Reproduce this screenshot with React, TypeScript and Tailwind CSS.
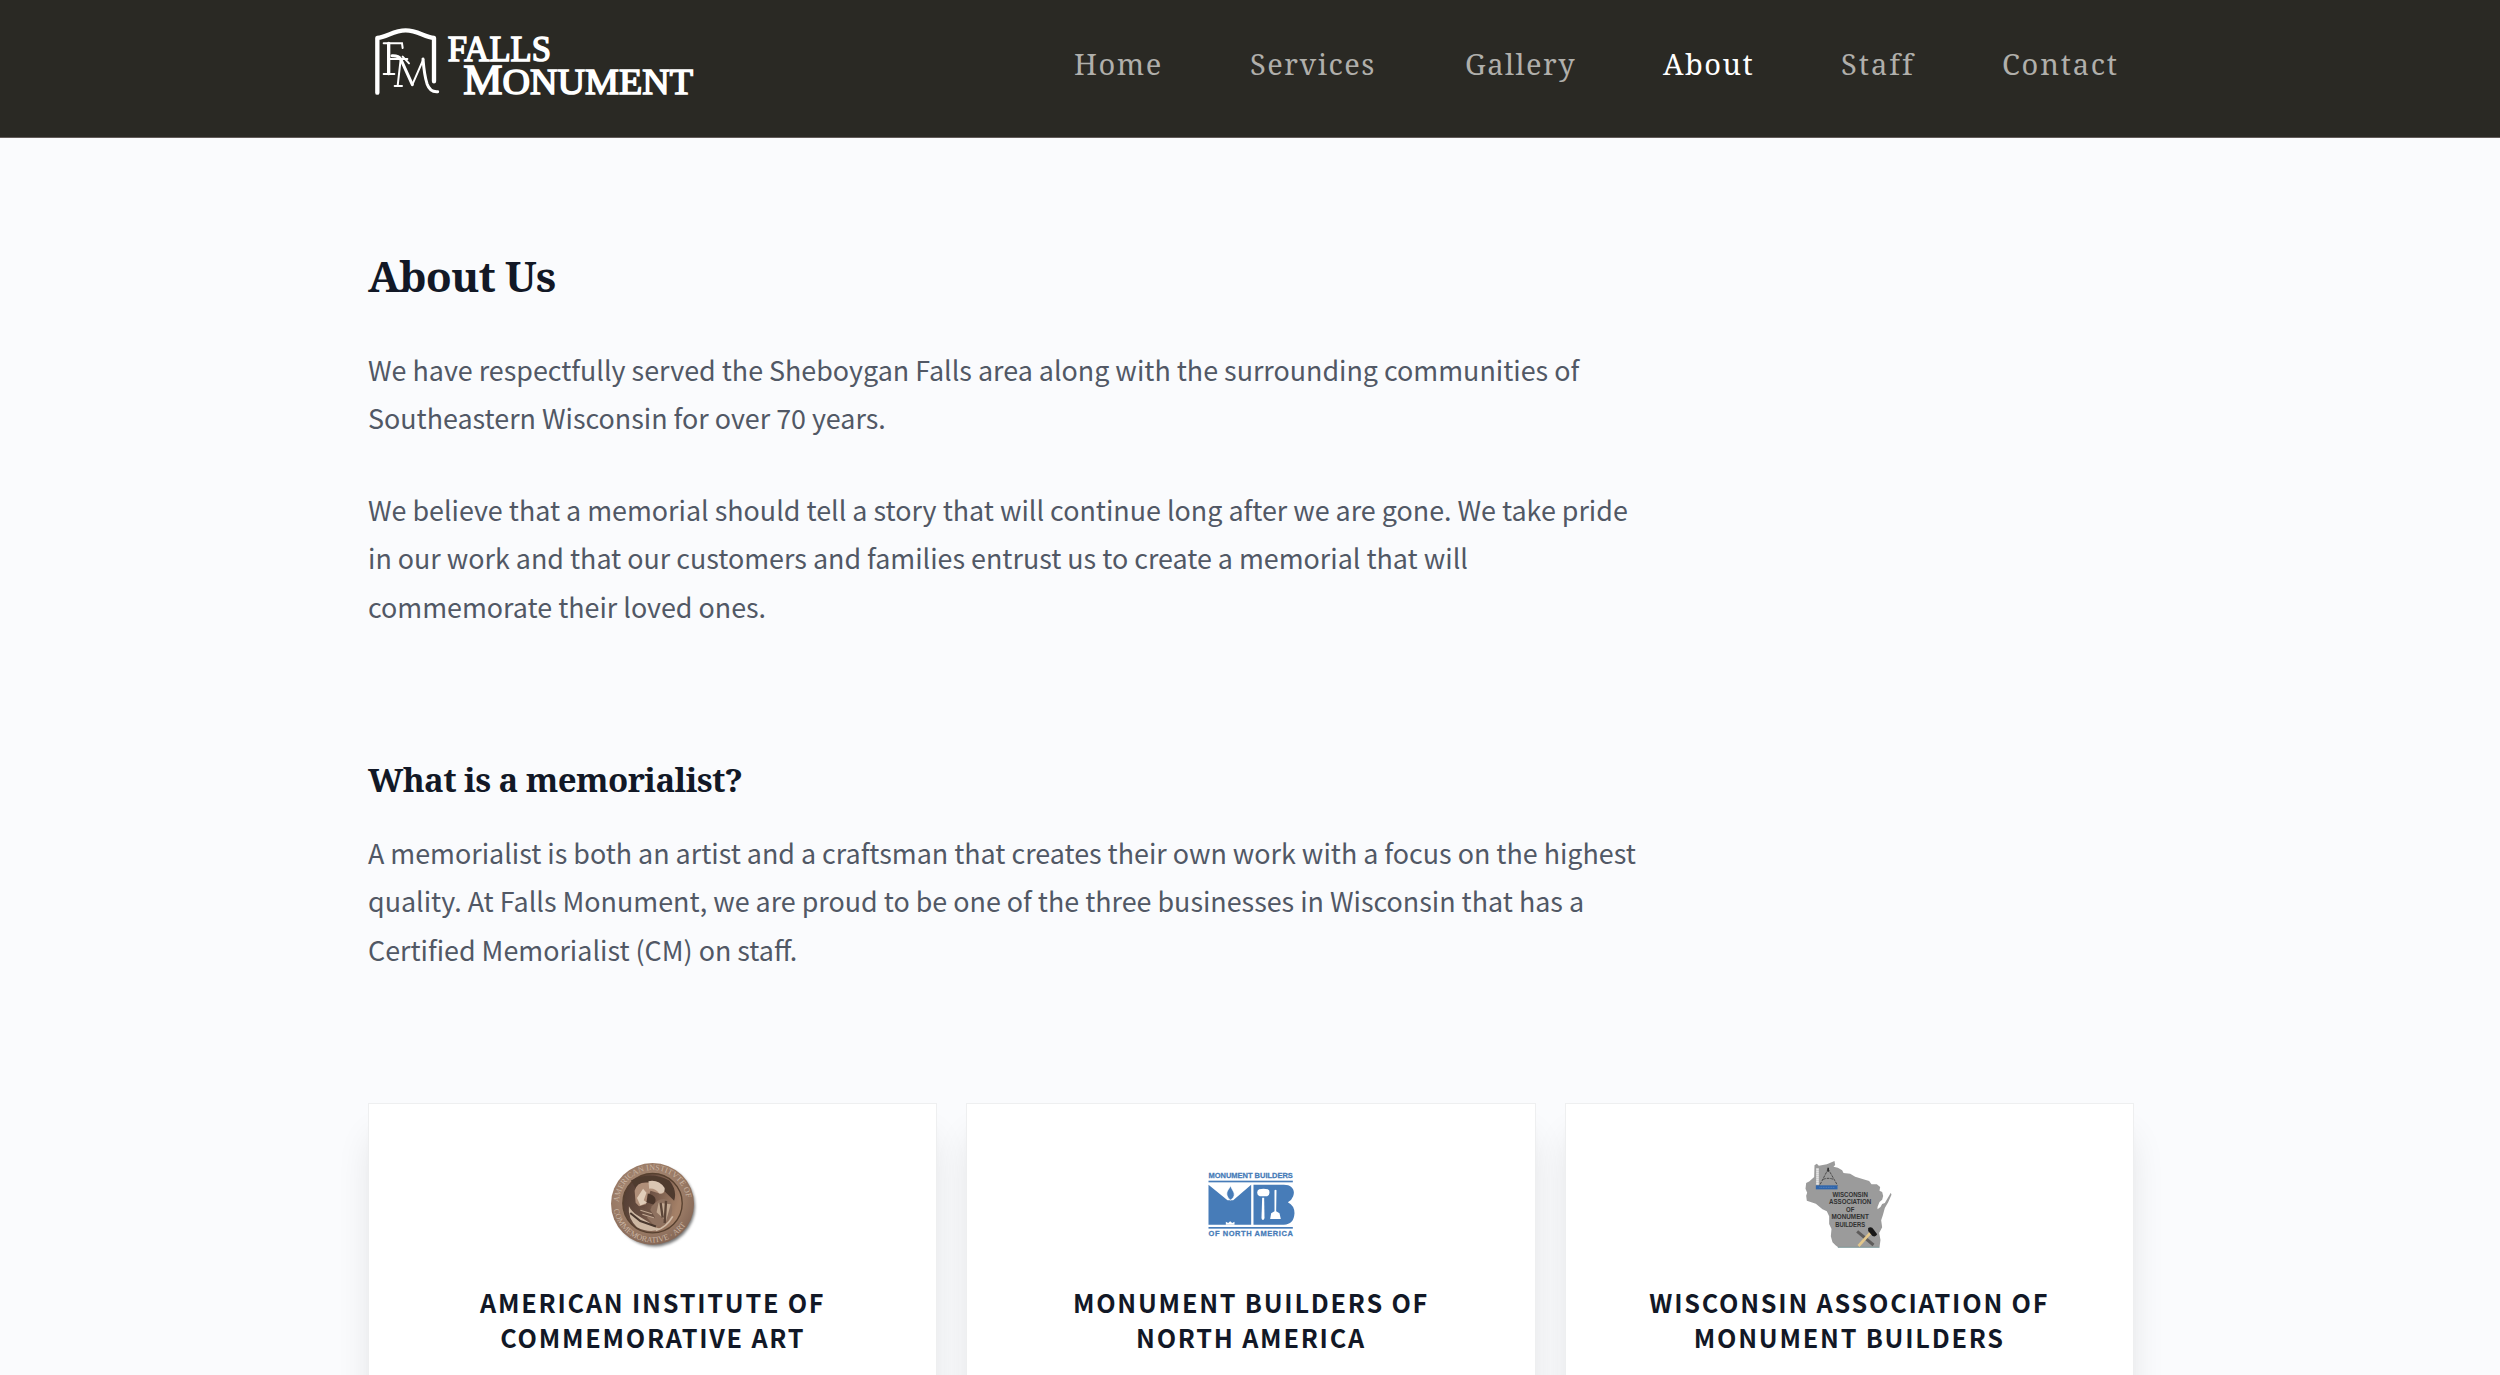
import React from 'react';

const navItems = [
  { label: 'Home', width: 'w-[176px]' },
  { label: 'Services', width: 'w-[215px]' },
  { label: 'Gallery', width: 'w-[198px]' },
  { label: 'About', width: 'w-[178px]', active: true },
  { label: 'Staff', width: 'w-[161px]', tracking: 'tracking-[2px]' },
  { label: 'Contact', width: 'w-[130px]', tracking: 'tracking-[1.8px]' },
];

function Logo() {
  return (
    <svg className="mt-[26px] ml-[7px] h-[72px] w-[320px] overflow-visible" viewBox="75 78 960 216" fill="#ffffff">
      <path
        d="M82 278V114C112 110 132 91 167 91C202 91 222 110 252 114V244"
        fill="none"
        stroke="#ffffff"
        strokeWidth="13"
        strokeLinecap="round"
        strokeLinejoin="round"
      />
      <g fill="none" stroke="#ffffff" strokeLinecap="round">
        <path d="M116 130V221" strokeWidth="10" />
        <path d="M101 130H156L158 144M101 222H133M116 177H172M158 170L177 190" strokeWidth="6" />
        <path d="M126 167Q146 166 152 177L187 254" strokeWidth="9" />
        <path d="M152 178L143 257M134 258H156" strokeWidth="6" />
        <path d="M187 254L220 178" strokeWidth="6" />
        <path d="M219 177Q223 226 231 251Q240 277 263 275" strokeWidth="9" />
      </g>
      <g fontFamily="'Liberation Serif', serif" stroke="#ffffff" strokeWidth="4.5">
        <text x="293" y="184" fontSize="107" textLength="310" lengthAdjust="spacingAndGlyphs">FALLS</text>
        <text x="340" y="281" fontSize="107" textLength="689" lengthAdjust="spacingAndGlyphs">
          <tspan fontSize="124">M</tspan>ONUMENT
        </text>
      </g>
    </svg>
  );
}

function MedalLogo() {
  return (
    <svg className="size-[86.4px] overflow-visible" viewBox="60 62 256 256">
      <defs>
        <radialGradient id="medal" cx="0.45" cy="0.4" r="0.6">
          <stop offset="0" stopColor="#b39581" />
          <stop offset="0.75" stopColor="#987964" />
          <stop offset="1" stopColor="#866857" />
        </radialGradient>
        <linearGradient id="bowl" x1="0" y1="0" x2="1" y2="0.3">
          <stop offset="0" stopColor="#4e3a30" />
          <stop offset="0.5" stopColor="#6a4f42" />
          <stop offset="1" stopColor="#a58168" />
        </linearGradient>
        <filter id="soft" x="-20%" y="-20%" width="140%" height="140%">
          <feGaussianBlur stdDeviation="4" />
        </filter>
        <filter id="relief">
          <feGaussianBlur stdDeviation="1.6" />
        </filter>
        <path id="ring-top" d="M86 184A101 101 0 0 1 288 196" />
        <path id="ring-bottom" d="M71 206A118 118 0 0 0 302 212" />
      </defs>
      <circle cx="193" cy="196" r="119" fill="#000000" opacity="0.55" filter="url(#soft)" />
      <ellipse cx="186" cy="189" rx="123" ry="121" fill="url(#medal)" />
      <g fill="#c9b4a2" fontFamily="'Liberation Serif', serif" fontSize="24">
        <text>
          <textPath href="#ring-top">AMERICAN INSTITVTE OF</textPath>
        </text>
        <text>
          <textPath href="#ring-bottom">COMMEMORATIVE · ART</textPath>
        </text>
      </g>
      <circle cx="186" cy="187" r="88" fill="url(#bowl)" stroke="#57402f" strokeWidth="4" />
      <g filter="url(#relief)">
        <path d="M122 120Q180 90 236 120Q260 150 250 180L220 150L140 150Z" fill="#503a2f" />
        <path d="M133 150Q140 122 174 126L218 142Q226 156 212 160L180 150L166 190L146 196L136 186Z" fill="#b08f79" />
        <path d="M174 122Q204 116 222 142Q224 160 206 158Q194 142 176 144Z" fill="#dac6b3" />
        <path d="M158 144L168 156L160 178L170 186L150 194L140 172Z" fill="#e0cdb9" />
        <path d="M172 158Q206 166 190 192L168 184Z" fill="#4a352c" />
        <path d="M184 196Q216 158 242 188Q252 222 222 250L196 258L170 230Z" fill="#8f7260" />
        <path d="M204 186L240 190L226 240L198 214Z" fill="#c3aa93" />
        <path d="M210 186L216 230M226 180L222 246" stroke="#5b4538" strokeWidth="7" fill="none" />
        <path d="M116 196Q126 214 140 222L176 244Q190 262 216 262Q178 278 140 258Q112 232 116 196Z" fill="#cdb7a2" />
        <path d="M120 216L150 240L196 256" stroke="#4a372d" strokeWidth="6" fill="none" />
        <path d="M148 200L178 206L194 230L164 224Z" fill="#6d5344" />
        <path d="M246 226Q228 258 196 268" stroke="#d0bba7" strokeWidth="5" fill="none" />
        <path d="M150 208L184 218M156 220L190 230" stroke="#c1a893" strokeWidth="3" fill="none" />
      </g>
    </svg>
  );
}

function BuildersLogo() {
  return (
    <svg className="size-[86.4px] overflow-visible" viewBox="53.5 33 259.2 259.2" fill="#477cb8">
      <g fontFamily="'Liberation Sans', sans-serif" fontWeight="700" fontSize="22.5">
        <text x="55" y="85" textLength="253" stroke="#477cb8" strokeWidth="0.8">MONUMENT BUILDERS</text>
        <text x="55" y="257" textLength="253" stroke="#477cb8" strokeWidth="0.8">OF NORTH AMERICA</text>
      </g>
      <rect x="55" y="92" width="253" height="5" />
      <rect x="55" y="231" width="253" height="5" />
      <path d="M55 104L112 151H129L183 104V224H55Z" />
      <path d="M121 107C116 119 107 124 111 137C113 144 118 148 121 150C125 147 131 144 132 136C134 126 125 120 121 107Z" stroke="#ffffff" strokeWidth="2" />
      <path d="M107 224V215L114 219L120 214L126 219L133 215V224Z" fill="#ffffff" />
      <path d="M190 104H281C306 104 316 120 309 139Q305 151 293 157Q313 167 313 190Q311 224 281 224H190Z" />
      <g fill="#ffffff">
        <path d="M207 118Q220 114 233 118Q239 120 238 128Q238 135 231 139H209Q201 136 201 128Q201 121 207 118Z" />
        <path d="M216 143H222L223 204Q222 210 218 210Q214 209 214 204Z" />
        <path d="M253 121Q257 117 259 121L258 184L268 190L272 207H240L243 190L253 184Z" />
      </g>
    </svg>
  );
}

function WisconsinLogo() {
  return (
    <svg className="size-[86.4px] overflow-visible" viewBox="49.5 33 259.2 259.2">
      <path
        d="M75 46L82 41L88 47L112 43L135 33L137 45L132 50L145 53L158 61L162 69L182 71L197 80L219 87L239 93L246 103L262 103L272 111L270 122L278 126L281 138L278 149L270 156L264 171L264 178L273 171L278 162L286 159L304 128L306 134L296 157L286 174L280 196L275 211L278 232L269 249L273 270L270 292L146 292L138 286L129 277L124 259L126 237L119 222L119 199L112 184L99 178L79 161L52 152L50 137L53 128L48 116L50 99L60 94L74 81Z"
        fill="#9b9b9b"
      />
      <path d="M145 292H270" stroke="#6f8f91" strokeWidth="2.5" />
      <path d="M84 55V105" stroke="#e5e5e5" strokeWidth="8" strokeDasharray="5 1" />
      <rect x="79" y="106" width="65" height="12" fill="#2f65ab" />
      <path d="M90 112H136" stroke="#6c93c6" strokeWidth="2" strokeDasharray="3 2" />
      <path d="M116 57L90 107M116 57L144 106M101 88Q116 82 132 88" fill="none" stroke="#4a4a4a" strokeWidth="3" strokeDasharray="8 3" />
      <path d="M116 53V65" stroke="#333333" strokeWidth="5" />
      <g fill="#303030" fontFamily="'Liberation Sans', sans-serif" fontWeight="700" fontSize="20" textAnchor="middle">
        <text x="182" y="140" textLength="106" lengthAdjust="spacingAndGlyphs">WISCONSIN</text>
        <text x="182" y="162" textLength="127" lengthAdjust="spacingAndGlyphs">ASSOCIATION</text>
        <text x="182" y="185" textLength="25" lengthAdjust="spacingAndGlyphs">OF</text>
        <text x="182" y="208" textLength="112" lengthAdjust="spacingAndGlyphs">MONUMENT</text>
        <text x="182" y="230" textLength="90" lengthAdjust="spacingAndGlyphs">BUILDERS</text>
      </g>
      <path d="M203 244L252 285" stroke="#5e5c5b" strokeWidth="9" />
      <path d="M207 288L244 247" stroke="#e3c78b" strokeWidth="8" />
      <path d="M236 234Q246 228 253 239L263 253Q259 262 249 258L236 243Z" fill="#181818" />
    </svg>
  );
}

const cards = [
  { lines: ['American Institute of', 'Commemorative Art'], Image: MedalLogo },
  { lines: ['Monument Builders of', 'North America'], Image: BuildersLogo },
  { lines: ['Wisconsin Association of', 'Monument Builders'], Image: WisconsinLogo },
];

export default function App() {
  return (
    <div className="h-[1375px] overflow-hidden bg-[#fafbfd] font-['Noto_Sans_CJK_SC',sans-serif] text-[26.87px] leading-[48.65px] text-[#515865]">
      <header className="h-[138px] border-b border-[#625b59] bg-[#2a2924]">
        <div className="mx-auto flex w-[1764px] justify-between">
          <Logo />
          <nav className="mt-[39px] flex font-['Noto_Serif',serif] text-[29px] leading-[50px] text-[#b0afab]">
            {navItems.map(({ label, width, active, tracking }) => (
              <a key={label} className={`${width} ${tracking ?? 'tracking-[1.5px]'} ${active ? 'text-white' : ''}`}>
                {label}
              </a>
            ))}
          </nav>
        </div>
      </header>

      <main className="mx-auto w-[1766px] pt-[112px] pl-px">
        <h1 className="font-['Noto_Serif',serif] text-[42.5px] leading-[52px] font-bold tracking-[-0.9px] text-[#121826]">About Us</h1>
        <div className="mt-[43.5px] flex w-[1278px] flex-col gap-[43px]">
          <p>
            We have respectfully served the Sheboygan Falls area along with the surrounding communities of Southeastern
            Wisconsin for over 70 years.
          </p>
          <p>
            We believe that a memorial should tell a story that will continue long after we are gone. We take pride in our
            work and that our customers and families entrust us to create a memorial that will commemorate their loved
            ones.
          </p>
        </div>
        <h2 className="mt-[126px] font-['Noto_Serif',serif] text-[33px] leading-[44px] font-bold tracking-[-0.57px] text-[#121826]">
          What is a memorialist?
        </h2>
        <p className="mt-[27px] w-[1278px]">
          A memorialist is both an artist and a craftsman that creates their own work with a focus on the highest quality.
          At Falls Monument, we are proud to be one of the three businesses in Wisconsin that has a Certified Memorialist
          (CM) on staff.
        </p>

        <section className="mt-[128px] grid w-[1766px] grid-cols-3 gap-[28.8px]">
          {cards.map(({ lines, Image }) => (
            <article
              key={lines[0]}
              className="flex h-[400px] flex-col items-center border border-[#eeeff0] bg-white pt-[57px] shadow-[0_29px_36px_-7px_rgba(0,0,0,0.12),0_14px_14px_-7px_rgba(0,0,0,0.04)]"
            >
              <Image />
              <h3 className="mt-[37.5px] text-center text-[25.2px] leading-[35.5px] font-bold tracking-[1.78px] text-[#121826] uppercase">
                {lines[0]}
                <br />
                {lines[1]}
              </h3>
            </article>
          ))}
        </section>
      </main>
    </div>
  );
}
